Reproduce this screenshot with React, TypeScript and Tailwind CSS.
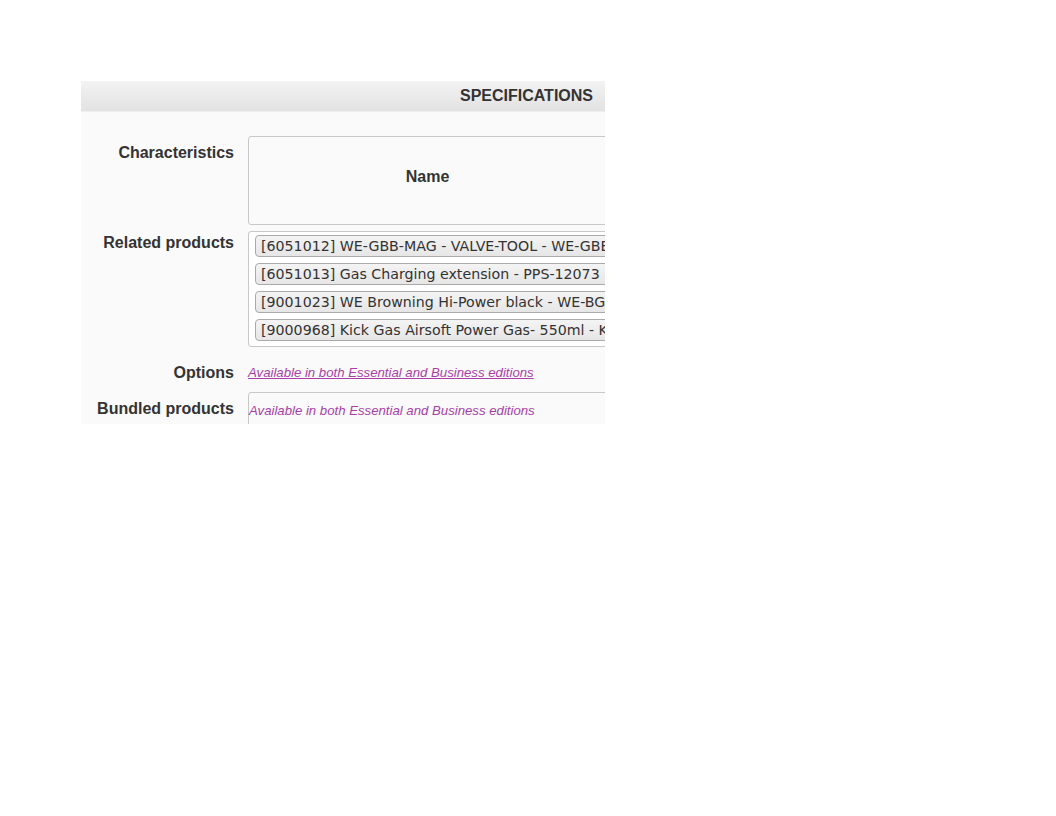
import React from "react";

const chips = [
  "[6051012] WE-GBB-MAG - VALVE-TOOL - WE-GBB-MAG-VALVE-TOOL",
  "[6051013] Gas Charging extension - PPS-12073",
  "[9001023] WE Browning Hi-Power black - WE-BG-HP-BLACK",
  "[9000968] Kick Gas Airsoft Power Gas- 550ml - KICK-GAS",
];

export default function App() {
  return (
    <div className="w-[1056px] h-[816px] bg-white pt-[81px] pl-[81px]" style={{ fontFamily: '"Liberation Sans", Arial, sans-serif' }}>
      <div className="w-[524px] h-[343px] overflow-hidden bg-[#fafafa]">
        <div className="h-[31px] bg-gradient-to-b from-[#f3f3f3] to-[#e2e2e2] border-b border-[#efefef] flex items-center justify-end pr-[12px]">
          <span className="text-[16px] font-bold text-[#333] leading-none">SPECIFICATIONS</span>
        </div>
        <div className="pt-[24px] flex flex-col">
          <div className="flex">
            <div className="w-[153px] shrink-0 text-right text-[16px] font-bold text-[#333] leading-[20px] pt-[7px]">Characteristics</div>
            <div className="ml-[14px] w-[600px] shrink-0 h-[89px] border border-[#c8c8c8] rounded-[3px] bg-[#fafafa] flex">
              <div className="w-[357px] flex items-center justify-center text-[16px] font-bold text-[#333] pb-[7px]">Name</div>
            </div>
          </div>
          <div className="flex mt-[6px]">
            <div className="w-[153px] shrink-0 text-right text-[16px] font-bold text-[#333] leading-[20px] pt-[2px]">Related products</div>
            <div className="ml-[14px] w-[600px] shrink-0 h-[116px] border border-[#c8c8c8] rounded-[3px] bg-white pl-[6px] pt-[3px] flex flex-col gap-[6px]">
              {chips.map((c) => (
                <div
                  key={c}
                  className="h-[22px] w-fit whitespace-nowrap border border-[#aaaaaa] rounded-[4px] bg-gradient-to-b from-[#f4f4f4] to-[#e6e6e6] pl-[5px] pr-[20px] text-[14.2px] text-[#333] leading-[20px]"
                  style={{ fontFamily: '"DejaVu Sans", Verdana, sans-serif' }}
                >
                  {c}
                </div>
              ))}
            </div>
          </div>
          <div className="flex mt-[15px] items-center">
            <div className="w-[153px] shrink-0 text-right text-[16px] font-bold text-[#333] leading-[20px]">Options</div>
            <a className="ml-[14px] text-[13.2px] italic underline text-[#a83fa8] leading-[20px] pt-[1px]">Available in both Essential and Business editions</a>
          </div>
          <div className="flex mt-[9px]">
            <div className="w-[153px] shrink-0 text-right text-[16px] font-bold text-[#333] leading-[20px] pt-[7px]">Bundled products</div>
            <div className="ml-[14px] w-[600px] shrink-0 h-[60px] border border-[#c8c8c8] rounded-[3px] bg-[#fafafa] pt-[5px]">
              <span className="text-[13.2px] italic text-[#a83fa8] leading-[20px]">Available in both Essential and Business editions</span>
            </div>
          </div>
        </div>
      </div>
    </div>
  );
}
